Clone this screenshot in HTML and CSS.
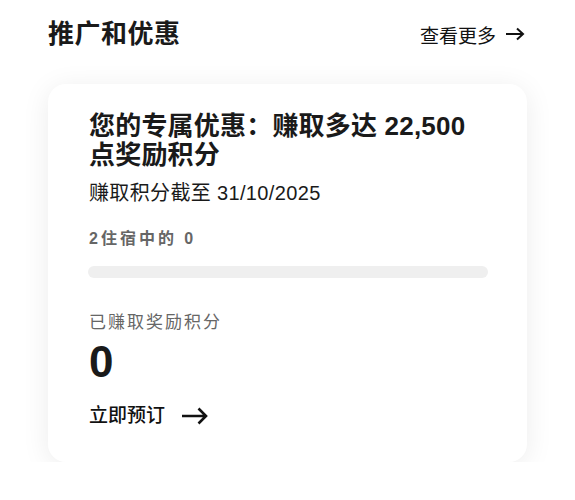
FILE: index.html
```html
<!DOCTYPE html>
<html lang="zh-CN">
<head>
<meta charset="utf-8">
<link rel="stylesheet" href="styles.css">
</head>
<body>
<section class="promo">
  <header class="promo-head">
    <h2 class="promo-title">推广和优惠</h2>
    <a class="more" href="#">查看更多
      <svg class="more-arrow" width="20" height="14" viewBox="0 0 20 14"><path d="M1 7H18M12 1.5L18 7L12 12.5" fill="none" stroke="#111" stroke-width="2"/></svg>
    </a>
  </header>
  <div class="card">
    <h3 class="card-title">您的专属优惠：赚取多达 22,500 点奖励积分</h3>
    <p class="card-sub">赚取积分截至 31/10/2025</p>
    <p class="stay">2住宿中的 0</p>
    <div class="bar"><div class="bar-fill" style="width:0%"></div></div>
    <p class="earned-label">已赚取奖励积分</p>
    <p class="earned">0</p>
    <a class="book" href="#">立即预订
      <svg class="book-arrow" width="28" height="18" viewBox="0 0 28 18"><path d="M1 9H25M17.5 1.5L25 9L17.5 16.5" fill="none" stroke="#111" stroke-width="2.6"/></svg>
    </a>
  </div>
</section>
</body>
</html>
```

FILE: styles.css
```css
* { box-sizing: border-box; }
body {
  margin: 0;
  background: #fff;
  color: #1a1a1a;
  font-family: "Liberation Sans", "Noto Sans CJK SC", sans-serif;
}
.promo {
  padding: 0 48px 0 48px;
}
.promo-head {
  display: flex;
  justify-content: space-between;
  align-items: center;
  height: 68px;
}
.promo-title {
  margin: 0;
  font-size: 26px;
  font-weight: 700;
  line-height: 32px;
  letter-spacing: 0.5px;
  color: #1a1a1a;
}
.more {
  display: flex;
  align-items: center;
  gap: 9px;
  font-size: 19px;
  color: #111;
  text-decoration: none;
  margin-right: 2px;
}
.card {
  margin-top: 16px;
  width: 479px;
  height: 378px;
  border-radius: 18px;
  background: #fff;
  box-shadow: 0 4px 28px rgba(0,0,0,0.08);
  padding: 28px 38px 30px 41px;
}
.card-title {
  margin: 0;
  font-size: 26px;
  line-height: 29px;
  font-weight: 700;
  letter-spacing: 0.2px;
  color: #1a1a1a;
  width: 392px;
}
.card-sub {
  margin: 10px 0 0;
  font-size: 20px;
  line-height: 26px;
  letter-spacing: 0.35px;
  color: #1a1a1a;
}
.stay {
  margin: 23px 0 0;
  font-size: 16px;
  line-height: 20px;
  font-weight: 700;
  color: #666;
  letter-spacing: 3px;
}
.bar {
  margin-top: 17px;
  height: 12px;
  width: 400px;
  border-radius: 6px;
  background: #efefef;
  margin-left: -1px;
}
.bar-fill { height: 100%; border-radius: 6px; background: #1a1a1a; }
.earned-label {
  margin: 34px 0 0;
  font-size: 17px;
  line-height: 22px;
  color: #666;
  letter-spacing: 2px;
}
.earned {
  margin: 6px 0 0;
  font-size: 44px;
  line-height: 44px;
  font-weight: 700;
  color: #1a1a1a;
}
.book {
  margin-top: 20px;
  display: flex;
  align-items: center;
  gap: 16px;
  font-size: 19px;
  line-height: 24px;
  color: #111;
  text-decoration: none;
  font-weight: 500;
}
```
